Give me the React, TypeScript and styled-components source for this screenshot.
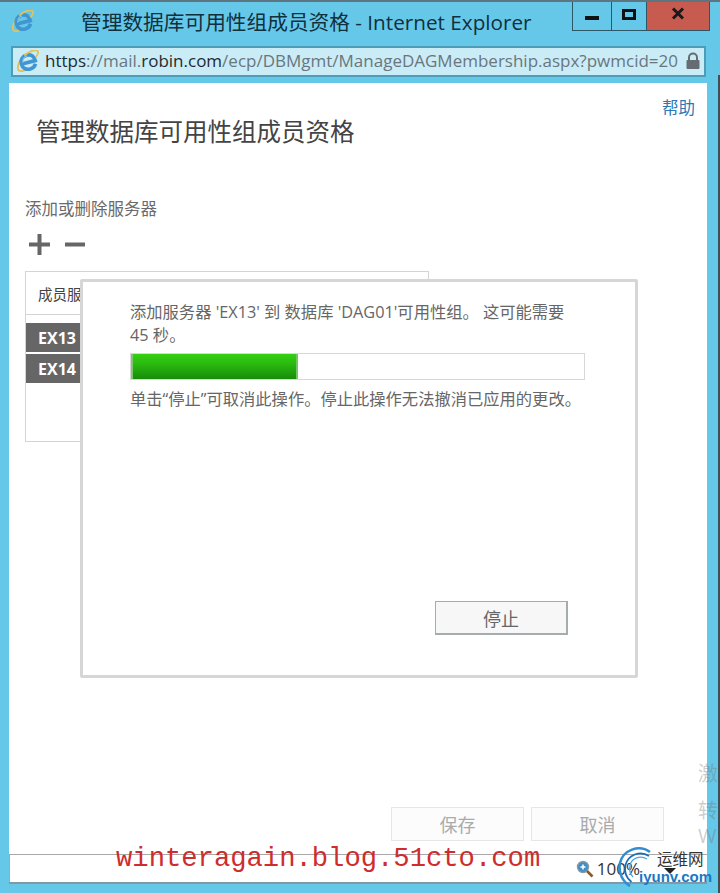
import React from 'react';
import styled, { createGlobalStyle } from 'styled-components';

const CJK = `"Open Sans", "Noto Sans CJK SC", sans-serif`;

const GlobalStyle = createGlobalStyle`
  html, body {
    margin: 0;
    padding: 0;
    background: #66c8e9;
  }
  * {
    box-sizing: border-box;
  }
`;

const IeLogo: React.FC<{ size: number }> = ({ size }) => (
  <svg width={size} height={size} viewBox="0 0 24 24" fill="none">
    <path d="M6.500 7C2.500 12 .5 18 1.200 21.500c.8 2 3.800 2 7.300.500" stroke="#e2c25a" strokeWidth="2" />
    <g transform="rotate(-14 12 13)">
      <path
        d="M6 13.500h14C20 8.500 17 5.500 12.500 5.500 7.500 5.500 4.500 9 4.500 13.500 4.500 18.500 8 21 12.500 21c3.200 0 5.500-1.500 7-4"
        stroke="#3f96d2"
        strokeWidth="4"
      />
      <path d="M6.500 12.500c0-3.500 2.500-6 6-6" stroke="#8ccbec" strokeWidth="1.200" />
    </g>
    <path d="M8 6c5-4.500 12-7 14.500-5 1.500 1.500-.5 5-2.500 7" stroke="#e2c25a" strokeWidth="2" />
  </svg>
);

export default function App() {
  return (
    <>
      <GlobalStyle />
      <Window>
        <TitleBar>
          <TitleLogo>
            <IeLogo size={22} />
          </TitleLogo>
          <Title>管理数据库可用性组成员资格 - Internet Explorer</Title>
          <WindowControls>
            <ControlButton $width={39}>
              <MinimizeGlyph />
            </ControlButton>
            <ControlButton $width={35}>
              <MaximizeGlyph />
            </ControlButton>
            <CloseButton>
              <svg width="14" height="13" viewBox="0 0 14 13">
                <path d="M2 1.500l10 10M12 1.500l-10 10" stroke="#1a1a1a" strokeWidth="3" />
              </svg>
            </CloseButton>
          </WindowControls>
        </TitleBar>

        <AddressBar>
          <IeLogo size={22} />
          <Url>
            <Strong>https</Strong>
            <Dim>://mail.</Dim>
            <Strong>robin.com</Strong>
            <Dim>/ecp/DBMgmt/ManageDAGMembership.aspx?pwmcid=20</Dim>
          </Url>
          <svg width="16" height="18" viewBox="0 0 16 18">
            <path d="M4 8V5.500a4 4 0 018 0V8" fill="none" stroke="#666d72" strokeWidth="2" />
            <rect x="1.500" y="8" width="13" height="9" rx="1" fill="#666d72" />
          </svg>
        </AddressBar>

        <Page>
          <Content>
            <HelpRow>
              <HelpLink>帮助</HelpLink>
            </HelpRow>
            <Heading>管理数据库可用性组成员资格</Heading>
            <SectionLabel>添加或删除服务器</SectionLabel>
            <Toolbar>
              <svg width="22" height="21" viewBox="0 0 22 21">
                <path d="M0 10.500h21M10.500 0v21" stroke="#666" strokeWidth="4" />
              </svg>
              <svg width="21" height="21" viewBox="0 0 21 21">
                <path d="M0 10.500h20" stroke="#666" strokeWidth="4" />
              </svg>
            </Toolbar>
            <ServerTable>
              <TableHead>成员服务器</TableHead>
              <ServerRow>EX13</ServerRow>
              <ServerRow>EX14</ServerRow>
            </ServerTable>
            <Footer>
              <FooterButton>保存</FooterButton>
              <FooterButton>取消</FooterButton>
            </Footer>
          </Content>
          <StatusBar>
            <Zoom>
              <svg width="18" height="18" viewBox="0 0 18 18">
                <circle cx="7" cy="7" r="5.500" fill="#3f8fc4" stroke="#8a9aa5" strokeWidth="1.400" />
                <path d="M4.500 7h5M7 4.500v5" stroke="#fff" strokeWidth="1.500" />
                <path d="M11 11l5.500 5.500" stroke="#8a5a2a" strokeWidth="2.600" />
              </svg>
              <span>100%</span>
            </Zoom>
            <ZoomCaret />
          </StatusBar>
        </Page>

        <RightEdge />

        <Dialog>
          <DialogText>
            添加服务器 'EX13' 到 数据库 'DAG01'可用性组。 这可能需要
            <br />
            45 秒。
          </DialogText>
          <ProgressTrack>
            <ProgressFill style={{ width: `${(167 / 453) * 100}%` }} />
          </ProgressTrack>
          <DialogNote>单击“停止”可取消此操作。停止此操作无法撤消已应用的更改。</DialogNote>
          <DialogActions>
            <StopButton>停止</StopButton>
          </DialogActions>
        </Dialog>

        <BlogMark>winteragain.blog.51cto.com</BlogMark>
        <EdgeMark>
          <span>激</span>
          <span>转</span>
          <span>W</span>
        </EdgeMark>
        <SiteLogo>
          <SiteArc width="44" height="42" viewBox="0 0 44 42" fill="none">
            <path d="M33 6C22 -2 6 4 3 17c-2 10 3 19 10 23" stroke="#2f8fd0" strokeWidth="2.600" />
            <path d="M32 10C23 4 11 9 8.500 19c-1.500 7 1 13 6 17" stroke="#1c6fb5" strokeWidth="1.800" />
            <path d="M30 13C23 9 15 12 13 19c-1 5 0 9 3 12" stroke="#4aa6de" strokeWidth="1.200" />
          </SiteArc>
          <SiteName>运维网</SiteName>
          <SiteUrl>iyunv.com</SiteUrl>
        </SiteLogo>
      </Window>
    </>
  );
}

const Window = styled.div`
  position: relative;
  width: 720px;
  height: 893px;
  overflow: hidden;
  display: flex;
  flex-direction: column;
  background: #66c8e9;
  border-top: 2px solid #5d7580;
  font-family: ${CJK};
`;

const TitleBar = styled.div`
  height: 44px;
  display: flex;
  align-items: flex-start;
  padding-left: 12px;
  flex-shrink: 0;
`;

const TitleLogo = styled.div`
  margin-top: 8px;
  width: 69px;
  flex-shrink: 0;
`;

const Title = styled.div`
  margin-top: 7px;
  font-size: 20.700px;
  line-height: 27px;
  color: #11303d;
  white-space: nowrap;
  flex: 1;
`;

const WindowControls = styled.div`
  display: flex;
  height: 29px;
  margin-right: 10px;
`;

const ControlButton = styled.div<{ $width: number }>`
  width: ${({ $width }) => $width}px;
  height: 29px;
  display: flex;
  align-items: center;
  justify-content: center;
  border: 1px solid #2d5666;
  border-top: none;
  border-right: none;
`;

const MinimizeGlyph = styled.div`
  width: 14px;
  height: 4px;
  margin-top: 3px;
  background: #111;
`;

const MaximizeGlyph = styled.div`
  width: 14px;
  height: 11px;
  margin-bottom: 4px;
  border: 3px solid #111;
`;

const CloseButton = styled.div`
  width: 64px;
  height: 29px;
  padding-bottom: 5px;
  display: flex;
  align-items: center;
  justify-content: center;
  background: #c75b50;
  border: 1px solid #2d5666;
  border-top: none;
`;

const AddressBar = styled.div`
  height: 31px;
  margin: 0 14px 6px 11px;
  padding: 0 3px 2px 4px;
  display: flex;
  align-items: center;
  background: #c9ecf7;
  border: 2px solid #4d9db8;
  flex-shrink: 0;
`;

const Url = styled.div`
  flex: 1;
  margin-left: 6px;
  font-size: 17px;
  white-space: nowrap;
  overflow: hidden;
`;

const Dim = styled.span`
  color: #69767d;
`;

const Strong = styled.span`
  color: #1f2a30;
`;

const Page = styled.div`
  position: relative;
  flex: 1;
  margin: 0 13px 9px 9px;
  display: flex;
  flex-direction: column;
  background: #fff;
  border-bottom: 2px solid #7f9aa5;
`;

const RightEdge = styled.div`
  position: absolute;
  right: 0;
  top: 73px;
  bottom: 0;
  width: 2px;
  background: #3d4f57;
`;

const Content = styled.div`
  flex: 1;
  display: flex;
  flex-direction: column;
  padding: 15px 12px 0 16px;
`;

const HelpRow = styled.div`
  display: flex;
  justify-content: flex-end;
`;

const HelpLink = styled.a`
  font-size: 16.500px;
  line-height: 20px;
  color: #2a7ab8;
`;

const Heading = styled.h1`
  margin: -3px 0 0 11px;
  font-size: 24.500px;
  line-height: 34px;
  font-weight: 400;
  color: #444;
`;

const SectionLabel = styled.div`
  margin-top: 49px;
  font-size: 16.500px;
  line-height: 22px;
  color: #6a6a6a;
`;

const Toolbar = styled.div`
  margin: 14px 0 0 4px;
  height: 21px;
  display: flex;
  gap: 14px;
`;

const ServerTable = styled.div`
  margin-top: 16px;
  width: 404px;
  height: 171px;
  border: 1px solid #d4d4d4;
  display: flex;
  flex-direction: column;
  gap: 2px;
  flex-shrink: 0;
`;

const TableHead = styled.div`
  height: 43px;
  margin-bottom: 6px;
  padding: 0 12px;
  display: flex;
  align-items: center;
  border-bottom: 1px solid #d4d4d4;
  font-size: 14.500px;
  color: #444;
`;

const ServerRow = styled.div`
  height: 29px;
  padding-left: 12px;
  display: flex;
  align-items: center;
  background: #666;
  color: #fff;
  font-size: 16px;
  font-weight: 700;
`;

const Footer = styled.div`
  margin-top: auto;
  margin-bottom: 13px;
  display: flex;
  justify-content: flex-end;
  gap: 7px;
  padding-right: 31px;
`;

const FooterButton = styled.div`
  width: 133px;
  height: 34px;
  display: flex;
  align-items: center;
  justify-content: center;
  background: #fcfcfc;
  border: 1px solid #e6e6e6;
  color: #a8abad;
  font-size: 18px;
`;

const StatusBar = styled.div`
  position: relative;
  height: 28px;
  display: flex;
  justify-content: flex-end;
  align-items: center;
  padding-right: 67px;
  border-top: 1px solid #a8a8a8;
  border-left: 1px solid #a8a8a8;
  flex-shrink: 0;
`;

const Zoom = styled.div`
  display: flex;
  align-items: center;
  gap: 3px;
  font-size: 17px;
  color: #333;
`;

const ZoomCaret = styled.div`
  position: absolute;
  right: 31px;
  top: 13px;
  border-left: 6px solid transparent;
  border-right: 6px solid transparent;
  border-top: 6px solid #222;
`;

const Dialog = styled.div`
  position: absolute;
  left: 80px;
  top: 277px;
  width: 558px;
  height: 399px;
  padding: 19px 50px 0 47px;
  display: flex;
  flex-direction: column;
  background: #fff;
  border: 3px solid #d6d6d6;
  border-radius: 2px;
`;

const DialogText = styled.div`
  font-size: 16.300px;
  line-height: 23px;
  color: #666;
  white-space: nowrap;
`;

const ProgressTrack = styled.div`
  margin-top: 6px;
  width: 455px;
  height: 27px;
  border: 1px solid #d8d8d8;
  background: #fff;
`;

const ProgressFill = styled.div`
  height: 100%;
  background: linear-gradient(#35cf12, #2bbd10 35%, #178c0a);
  border-left: 2px solid #7bc96c;
  border-right: 2px solid #6fc75e;
`;

const DialogNote = styled.div`
  margin-top: 8px;
  font-size: 16.300px;
  line-height: 22px;
  color: #666;
  white-space: nowrap;
`;

const DialogActions = styled.div`
  margin: 191px 17px 0 0;
  display: flex;
  justify-content: flex-end;
`;

const StopButton = styled.div`
  width: 133px;
  height: 34px;
  display: flex;
  align-items: center;
  justify-content: center;
  background: #f7f7f7;
  border: 2px solid #a5acae;
  border-width: 1px 2px 2px 1px;
  color: #666;
  font-size: 18px;
`;

const BlogMark = styled.div`
  position: absolute;
  left: 116px;
  top: 841px;
  font-family: "Liberation Mono", monospace;
  font-size: 27.200px;
  line-height: 32px;
  color: #cf2c2c;
  white-space: nowrap;
  pointer-events: none;
`;

const EdgeMark = styled.div`
  position: absolute;
  left: 698px;
  top: 762px;
  width: 20px;
  display: grid;
  grid-template-rows: 37px 25px 20px;
  font-size: 20px;
  line-height: 20px;
  color: rgba(110, 110, 110, 0.35);
`;

const SiteLogo = styled.div`
  position: absolute;
  left: 616px;
  top: 843px;
  width: 102px;
  height: 47px;
`;

const SiteArc = styled.svg`
  position: absolute;
  left: 1px;
  top: 1px;
`;

const SiteName = styled.div`
  position: absolute;
  left: 41px;
  top: 4px;
  font-size: 15.500px;
  line-height: 20px;
  color: #333;
  white-space: nowrap;
`;

const SiteUrl = styled.div`
  position: absolute;
  left: 23px;
  top: 22px;
  font-family: "Liberation Sans", sans-serif;
  font-size: 15px;
  line-height: 20px;
  font-weight: 700;
  color: #1778c4;
  white-space: nowrap;
`;
